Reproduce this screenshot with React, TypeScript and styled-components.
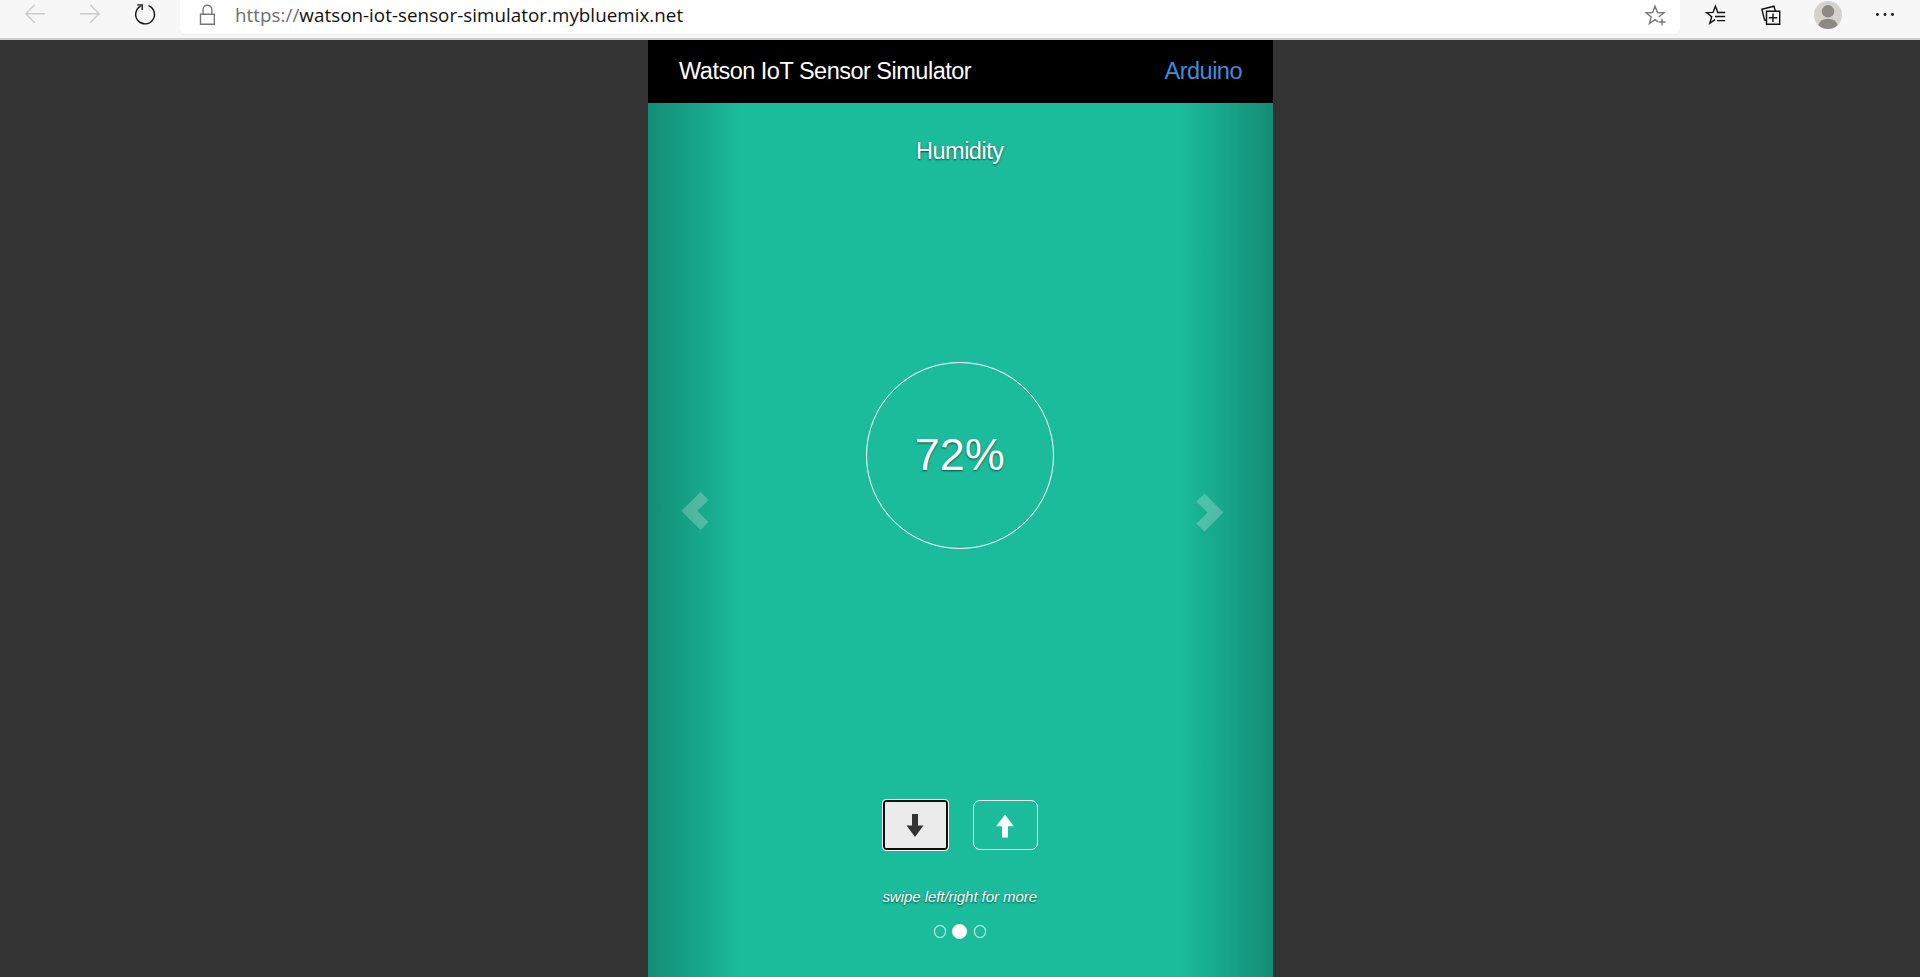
import React from "react";
import styled, { createGlobalStyle } from "styled-components";

const Global = createGlobalStyle`
  * { box-sizing: border-box; }
  body { margin: 0; background: #333; overflow: hidden; }
`;

const Page = styled.div`
  display: flex;
  flex-direction: column;
  height: 977px;
  background: #333;
  font-family: "Liberation Sans", Arial, sans-serif;
`;

const Toolbar = styled.header`
  display: flex;
  align-items: flex-start;
  height: 40px;
  flex: none;
  background: #f7f7f7;
  border-bottom: 2px solid #cdcdcd;
`;

const Navigation = styled.nav`
  display: flex;
  gap: 25px;
  width: 180px;
  padding-left: 20px;
`;

const AddressBar = styled.div`
  display: flex;
  width: 1500px;
  height: 34px;
  padding: 0 10px 0 13px;
  background: #fff;
  border-radius: 0 0 6px 6px;
  box-shadow: 0 1px 2px rgba(0, 0, 0, 0.04);
`;

const Url = styled.span`
  flex: 1;
  margin-left: 12px;
  font-family: "Open Sans", "Noto Sans", sans-serif;
  font-size: 18.75px;
  line-height: 29px;
  letter-spacing: 0.05px;
  white-space: nowrap;
  color: #111;
`;

const Scheme = styled.span`
  color: #6e6e6e;
`;

const Actions = styled.div`
  display: flex;
  gap: 26px;
  padding-left: 20px;
`;

const Icon = styled.svg<{ $color?: string }>`
  display: block;
  flex: none;
  width: 30px;
  height: 30px;
  fill: none;
  stroke: ${(p) => p.$color ?? "#111"};
  stroke-width: 1.4;
`;

const Phone = styled.main`
  display: flex;
  flex-direction: column;
  flex: 1;
  width: 625px;
  margin-left: 648px;
`;

const TitleBar = styled.div`
  display: flex;
  justify-content: space-between;
  align-items: center;
  height: 63px;
  padding: 0 31px;
  background: #000;
  color: #fff;
  font-size: 23.5px;
  letter-spacing: -0.5px;
`;

const DeviceLink = styled.a`
  color: #428bdd;
`;

const Slide = styled.section`
  display: flex;
  flex: 1;
  background: #1abc9c;
`;

const Control = styled.div<{ $side: "left" | "right" }>`
  display: flex;
  width: 93.75px;
  padding-top: ${(p) => (p.$side === "left" ? 387 : 388)}px;
  padding-left: ${(p) => (p.$side === "left" ? 32 : 16)}px;
  background: linear-gradient(
    to ${(p) => (p.$side === "left" ? "right" : "left")},
    rgba(0, 0, 0, 0.25),
    rgba(0, 0, 0, 0)
  );
`;

const Chevron = styled.svg`
  width: 32px;
  height: 42px;
  fill: rgba(255, 255, 255, 0.24);
  filter: drop-shadow(0 1px 1px rgba(0, 0, 0, 0.06));
`;

const Content = styled.div`
  display: flex;
  flex: 1;
  flex-direction: column;
  align-items: center;
  padding-right: 1.5px;
  color: #fff;
  text-shadow: 0 1px 2px rgba(0, 0, 0, 0.6);
`;

const SensorName = styled.h1`
  margin: 34px 0 0;
  font-size: 23.5px;
  font-weight: 400;
  line-height: 28px;
  letter-spacing: -0.5px;
`;

const Gauge = styled.div`
  display: flex;
  align-items: center;
  justify-content: center;
  width: 188px;
  height: 187px;
  margin-top: 197px;
  padding-bottom: 1px;
  border: 1px solid #fff;
  border-radius: 50%;
  font-size: 45px;
`;

const Buttons = styled.div`
  display: flex;
  gap: 24px;
  margin-top: 250px;
`;

const StepButton = styled.button<{ $focused?: boolean }>`
  display: flex;
  align-items: center;
  justify-content: center;
  width: ${(p) => (p.$focused ? 67 : 65)}px;
  height: ${(p) => (p.$focused ? 52 : 50)}px;
  margin: ${(p) => (p.$focused ? "0" : "1px 0")};
  padding: 1px 0 0;
  border: 1px solid #fff;
  border-radius: ${(p) => (p.$focused ? 4 : 7)}px;
  background: ${(p) => (p.$focused ? "#ebebeb" : "transparent")};
  box-shadow: ${(p) => (p.$focused ? "inset 0 0 0 2px #101010" : "none")};
`;

const Arrow = styled.svg<{ $fill: string }>`
  width: 18px;
  height: 24px;
  fill: ${(p) => p.$fill};
`;

const Hint = styled.p`
  margin: 36px 0 0;
  font-size: 15px;
  font-style: italic;
  line-height: 20px;
  letter-spacing: -0.05px;
`;

const Indicators = styled.div`
  display: flex;
  align-items: center;
  gap: 6.25px;
  margin-top: 17px;
`;

const Dot = styled.span<{ $active?: boolean }>`
  width: ${(p) => (p.$active ? 15 : 12.5)}px;
  height: ${(p) => (p.$active ? 15 : 12.5)}px;
  border: 1px solid #fff;
  border-radius: 50%;
  background: ${(p) => (p.$active ? "#fff" : "transparent")};
`;

export default function App() {
  return (
    <Page>
      <Global />
      <Toolbar>
        <Navigation>
          <Icon $color="#cbcbcb"><path d="M25 13.8H6M14.8 4.8 5.8 13.8l9 9" /></Icon>
          <Icon $color="#cbcbcb"><path d="M5 13.8h19M15.2 4.8l9 9-9 9" /></Icon>
          <Icon><path d="M18.5 5.7A9.4 9.4 0 1 1 10.6 6.2M7.2 4.9h5v5" /></Icon>
        </Navigation>
        <AddressBar>
          <Icon $color="#777"><path d="M7.5 14.3h13.8v10H7.5ZM10 14.3V9.6a4.4 4.4 0 0 1 8.8 0v4.7" /></Icon>
          <Url><Scheme>https://</Scheme>watson-iot-sensor-simulator.mybluemix.net</Url>
          <Icon $color="#777">
            <path d="M18.7 17 24 12.7l-6.5-.2L15 6.2l-2.4 6.3-6.6.2 5.2 4.2L9.4 23.5 15 19.6l3 2M22 18.5v7M18.5 22H25.5" />
          </Icon>
        </AddressBar>
        <Actions>
          <Icon>
            <path d="M17.7 12.2 15.4 6.2 13 12.4l-6.5.2 5.2 4.2-1.9 6.5 5.2-3.6M17 12.5h8.2M15 16.5h10.2M17 20.6h8.2" />
          </Icon>
          <Icon>
            <path d="M10.5 11.2h13.2v13H10.5ZM17 13.5v8.5M12.8 17.7h8.5M10.2 20.5 8.6 20 5.8 9.3 18 6.2l1.2 4.5" />
          </Icon>
          <Icon $color="none">
            <circle cx="16" cy="15" r="14" fill="#d4d2cd" />
            <circle cx="16" cy="11.3" r="6.2" fill="#8c8883" />
            <path d="M6.2 25Q9 18.8 16 18.8T25.8 25Q21.8 29 16 29T6.2 25Z" fill="#8c8883" />
          </Icon>
          <Icon $color="none">
            <g fill="#111">
              <circle cx="9.5" cy="14.5" r="1.4" />
              <circle cx="17" cy="14.5" r="1.4" />
              <circle cx="24.5" cy="14.5" r="1.4" />
            </g>
          </Icon>
        </Actions>
      </Toolbar>
      <Phone>
        <TitleBar>
          <span>Watson IoT Sensor Simulator</span>
          <DeviceLink>Arduino</DeviceLink>
        </TitleBar>
        <Slide>
          <Control $side="left">
            <Chevron><path d="M1.5 21 20.5 2l8 8-11 11 11 11-8 8Z" /></Chevron>
          </Control>
          <Content>
            <SensorName>Humidity</SensorName>
            <Gauge>72%</Gauge>
            <Buttons>
              <StepButton $focused>
                <Arrow $fill="#333"><path d="M6 0h6v11.5h5.5L9 23 .5 11.5H6Z" /></Arrow>
              </StepButton>
              <StepButton>
                <Arrow $fill="#fff"><path d="M9 .5 17.8 12.3H12V23.5H6V12.3H.2Z" /></Arrow>
              </StepButton>
            </Buttons>
            <Hint>swipe left/right for more</Hint>
            <Indicators>
              <Dot />
              <Dot $active />
              <Dot />
            </Indicators>
          </Content>
          <Control $side="right">
            <Chevron><path d="M28.5 21.5 9.5 2.5l-8 8 11 11-11 11 8 8Z" /></Chevron>
          </Control>
        </Slide>
      </Phone>
    </Page>
  );
}
